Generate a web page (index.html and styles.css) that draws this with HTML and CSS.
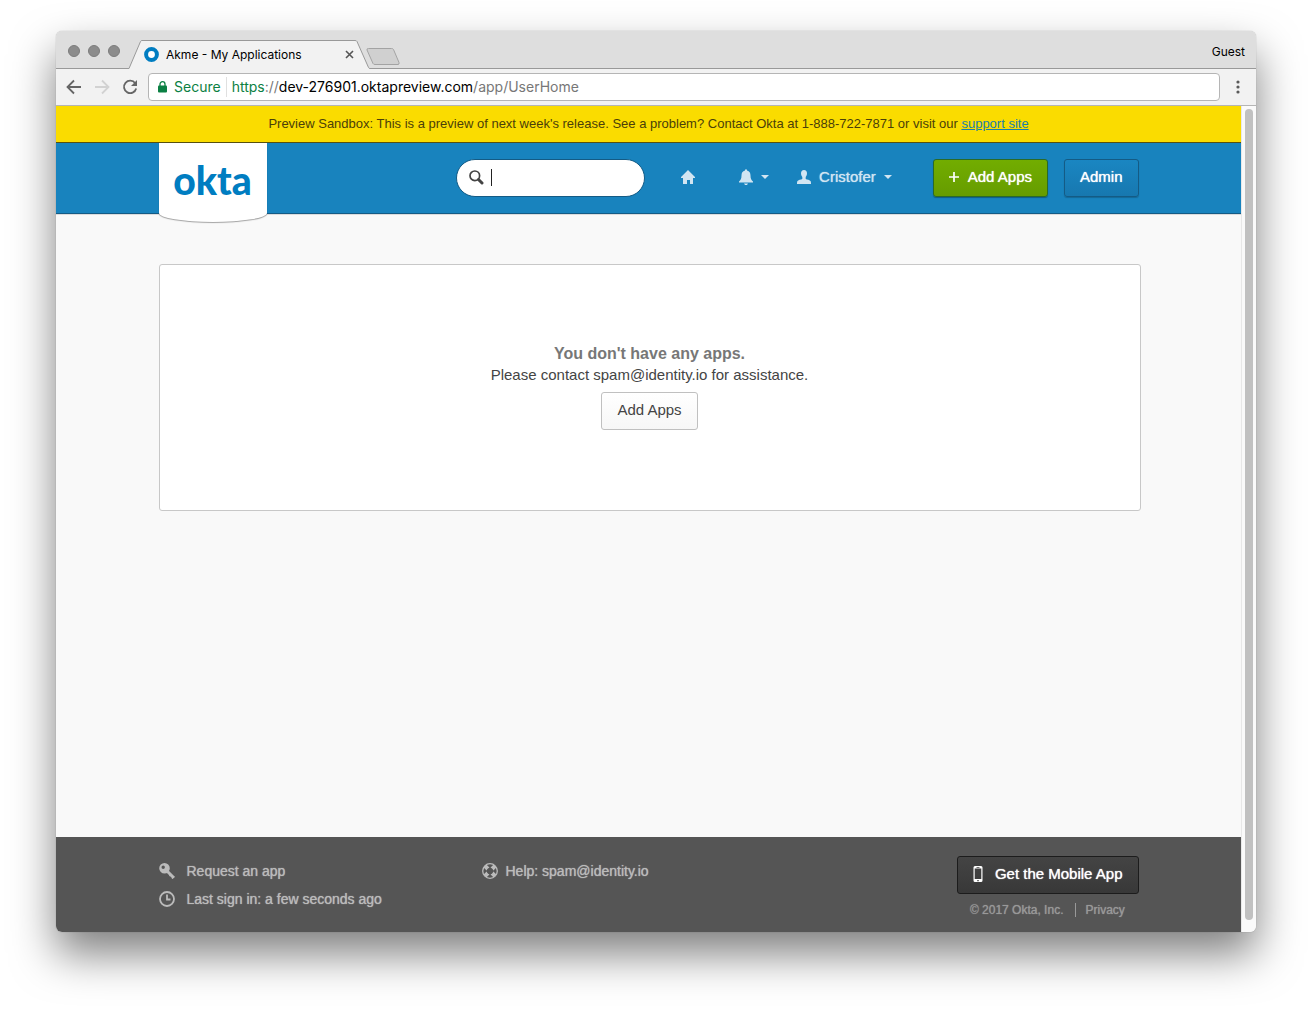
FILE: index.html
```html
<!DOCTYPE html>
<html lang="en">
<head>
<meta charset="utf-8">
<title>Akme - My Applications</title>
<link rel="stylesheet" href="styles.css">
</head>
<body>
<div class="window">
  <div class="tabstrip">
    <div class="lights"><span class="light"></span><span class="light"></span><span class="light"></span></div>
    <div class="tab">
      <svg class="tab-shape" viewBox="0 0 242 29" preserveAspectRatio="none" aria-hidden="true"><path d="M0 28.500H1L12.500 1.500Q13 .5 14 .5H227Q228.500 .5 229 1.500L240.500 27.500Q241 28.500 242 28.500V29H0Z" fill="#f2f2f2"/><path d="M0 28.500H1L12.500 1.500Q13 .5 14 .5H227Q228.500 .5 229 1.500L240.500 27.500Q241 28.500 242 28.500" fill="none" stroke="#999"/></svg>
      <svg class="favicon" width="15" height="15" viewBox="0 0 15 15" aria-hidden="true"><circle cx="7.500" cy="7.500" r="5.400" fill="#fff" stroke="#007dc1" stroke-width="4"/></svg>
      <span class="tab-title">Akme - My Applications</span>
      <button class="plain tab-close" aria-label="Close tab"><svg width="9" height="9" viewBox="0 0 9 9"><path d="M1 1l7 7M8 1L1 8" stroke="#555" stroke-width="1.600"/></svg></button>
    </div>
    <button class="plain new-tab" aria-label="New tab"><svg width="34" height="17" viewBox="0 0 34 17"><path d="M2.500 .5H25.500Q27 .5 27.500 1.500L33 14.500Q33.500 16.500 32 16.500H9Q7.500 16.500 7 15.500L1 2Q.5 .5 2.500 .5Z" fill="#d0d0d0" stroke="#a3a3a3"/></svg></button>
    <span class="guest">Guest</span>
  </div>
  <div class="toolbar">
    <button class="plain nav-btn" aria-label="Back"><svg width="16" height="16" viewBox="0 0 16 16" fill="none" stroke="#666" stroke-width="1.800"><path d="M15 8H2M8 1.500L1.500 8L8 14.500"/></svg></button>
    <button class="plain nav-btn" aria-label="Forward"><svg width="16" height="16" viewBox="0 0 16 16" fill="none" stroke="#d2d2d2" stroke-width="1.800"><path d="M1 8H14M8 1.500L14.500 8L8 14.500"/></svg></button>
    <button class="plain nav-btn" aria-label="Reload"><svg width="16" height="16" viewBox="0 0 16 16"><path d="M13.200 4.200A6.200 6.200 0 1 0 14.200 9.500" fill="none" stroke="#666" stroke-width="1.800"/><path d="M15 1V7H9Z" fill="#666"/></svg></button>
    <div class="address">
      <svg width="9" height="12" viewBox="0 0 9 12" aria-hidden="true"><path d="M2 5V3.200a2.500 2.500 0 0 1 5 0V5" fill="none" stroke="#0b8043" stroke-width="1.300"/><rect y="4.500" width="9" height="7" rx="1" fill="#0b8043"/></svg>
      <span class="secure">Secure</span>
      <span class="url"><span class="scheme">https</span>://<span class="host">dev-276901.oktapreview.com</span>/app/UserHome</span>
    </div>
    <button class="plain menu-btn" aria-label="Menu"><svg width="4" height="14" viewBox="0 0 4 14" fill="#5a5a5a"><circle cx="2" cy="2" r="1.600"/><circle cx="2" cy="7" r="1.600"/><circle cx="2" cy="12" r="1.600"/></svg></button>
  </div>
  <div class="viewport">
    <div class="page">
      <div class="banner">Preview Sandbox: This is a preview of next week's release. See a problem? Contact Okta at 1-888-722-7871 or visit our <a href="#">support site</a></div>
      <header class="header">
        <div class="container header-row">
          <a class="logo" href="#">okta</a>
          <div class="header-right">
            <label class="search">
              <svg width="15" height="15" viewBox="0 0 15 15" aria-hidden="true"><circle cx="5.800" cy="5.800" r="4.800" fill="none" stroke="#444" stroke-width="1.700"/><path d="M9.500 9.500L13 13" stroke="#444" stroke-width="3" stroke-linecap="round"/></svg>
              <span class="caret-bar"></span>
              <input type="text" aria-label="Search apps">
            </label>
            <nav class="nav">
              <a class="nav-link" href="#" aria-label="Home"><svg width="14" height="14" viewBox="0 0 14 14" fill="#d1e5f2"><path d="M7 0L14 7V8H12V14H9V10H6V14H2V8H0V7Z"/></svg></a>
              <a class="nav-link" href="#" aria-label="Notifications"><svg width="14" height="16" viewBox="0 0 14 16" fill="#d1e5f2"><path d="M6 .5h2v1C10.500 2 11.500 4 11.500 6.500C11.500 10 12.500 11 14 12.500V13.500H0V12.500C1.500 11 2.500 10 2.500 6.500C2.500 4 3.500 2 6 1.500ZM5 14.500H9L8 16H6Z"/></svg><span class="down"></span></a>
              <a class="nav-link" href="#"><svg width="14" height="14" viewBox="0 0 14 14" fill="#d1e5f2"><path d="M7 0C9 0 10 1.300 10 3.300C10 5 9.300 6.300 8.700 7V9C10 9.500 13 10 13.700 11.300Q14 12 14 14H0Q0 12 .3 11.300C1 10 4 9.500 5.300 9V7C4.700 6.300 4 5 4 3.300C4 1.300 5 0 7 0Z"/></svg><span class="user-name">Cristofer</span><span class="down"></span></a>
            </nav>
            <button class="btn btn-green"><svg width="10" height="10" viewBox="0 0 10 10" aria-hidden="true"><path d="M5 0V10M0 5H10" stroke="#fff" stroke-width="1.700"/></svg>Add Apps</button>
            <button class="btn btn-blue">Admin</button>
          </div>
        </div>
      </header>
      <main class="container main">
        <section class="card">
          <h1>You don't have any apps.</h1>
          <p>Please contact spam@identity.io for assistance.</p>
          <button class="btn btn-light">Add Apps</button>
        </section>
      </main>
      <footer class="footer">
        <div class="container footer-row">
          <div class="foot-col">
            <a class="foot-link" href="#"><svg width="16" height="16" viewBox="0 0 16 16"><path fill-rule="evenodd" fill="#bbb" d="M5.500 0a5.300 5.300 0 1 1 0 10.600A5.300 5.300 0 0 1 5.500 0ZM4.200 2.500a1.700 1.700 0 1 0 0 3.400A1.700 1.700 0 0 0 4.200 2.500Z"/><path d="M7.500 7.500L14.500 14.500" stroke="#bbb" stroke-width="3"/><path d="M10.500 13l2-1.500M13 15.500l2.500-2" stroke="#bbb" stroke-width="1.500"/></svg>Request an app</a>
            <span class="foot-link"><svg width="16" height="16" viewBox="0 0 16 16" fill="none" stroke="#bbb" stroke-width="1.800"><circle cx="8" cy="8" r="7"/><path d="M8 3.500V8.500H11.500"/></svg>Last sign in: a few seconds ago</span>
          </div>
          <div class="foot-col foot-help">
            <a class="foot-link tight" href="#"><svg width="16" height="16" viewBox="0 0 16 16" fill="none" stroke="#bbb"><circle cx="8" cy="8" r="7.300" stroke-width="1.300"/><path d="M3 3L6 6M13 3L10 6M3 13L6 10M13 13L10 10" stroke-width="4"/><circle cx="8" cy="8" r="3.100" fill="#555" stroke="none"/></svg>Help: spam@identity.io</a>
          </div>
          <div class="foot-right">
            <button class="btn btn-dark"><svg width="10" height="16" viewBox="0 0 10 16" aria-hidden="true"><path fill="#fff" fill-rule="evenodd" d="M2 0H8Q9.500 0 9.500 1.500V14.500Q9.500 16 8 16H2Q.5 16 .5 14.500V1.500Q.5 0 2 0ZM1.700 2.500V13H8.300V2.500ZM3.500 .9V1.700H6.500V.9ZM4.300 14V15.200H5.700V14Z"/></svg>Get the Mobile App</button>
            <div class="legal"><span>© 2017 Okta, Inc.</span><a href="#">Privacy</a></div>
          </div>
        </div>
      </footer>
    </div>
    <div class="scroll-track"><div class="scroll-thumb"></div></div>
  </div>
</div>
</body>
</html>
```
FILE: styles.css
```css
* { box-sizing: border-box; }

body {
  margin: 0;
  padding: 31px 56px 80px;
  background: #fff;
  color: #444;
  font: 15px/22px "Liberation Sans", Arial, sans-serif;
}

a { color: inherit; text-decoration: none; }
svg { display: block; flex: none; }

.plain { padding: 0; border: 0; background: none; }

.window {
  display: flex;
  flex-direction: column;
  min-height: calc(100vh - 111px);
  border-radius: 6px;
  background: #f2f2f2;
  box-shadow: 0 0 1px rgba(0, 0, 0, .4), 0 22px 44px rgba(0, 0, 0, .5);
  overflow: hidden;
}

/* Browser chrome */
.tabstrip {
  display: flex;
  align-items: flex-end;
  height: 38px;
  background: #dedede;
  box-shadow: inset 0 -1px #999;
  color: #000;
  font: 12px/18px Inter, sans-serif;
}
.lights { display: flex; gap: 8px; padding: 0 8px 12px 12px; }
.light { width: 12px; height: 12px; border: 1px solid #7c7c7c; border-radius: 50%; background: #8c8c8c; }
.tab {
  position: relative;
  display: flex;
  align-items: center;
  width: 242px;
  height: 29px;
  padding: 0 16px;
}
.tab-shape { position: absolute; inset: 0; width: 100%; height: 100%; }
.favicon, .tab-title, .tab-close { position: relative; }
.tab-title { flex: 1; margin-left: 7px; white-space: nowrap; }
.new-tab { margin: 0 0 4px -4px; }
.guest { margin: 0 11px 8px auto; }

.toolbar {
  display: flex;
  align-items: center;
  height: 37px;
  padding: 0 16px 0 10px;
  border-bottom: 1px solid #b5b5b5;
}
.nav-btn { margin-right: 12px; }
.address {
  display: flex;
  flex: 1;
  align-items: center;
  height: 28px;
  margin-right: 16px;
  margin-left: -2px;
  padding: 0 9px;
  border: 1px solid #b5b5b5;
  border-radius: 4px;
  background: #fff;
  font: 14px/20px Inter, sans-serif;
}
.secure { margin-left: 7px; padding-right: 5px; border-right: 1px solid #e0e0e0; color: #0b8043; }
.url { margin-left: 5px; color: #777; }
.scheme { color: #0b8043; }
.host { color: #000; }

/* Page */
.viewport { display: flex; flex: 1; }
.page { display: flex; flex: 1; flex-direction: column; background: #f9f9f9; }
.scroll-track { width: 15px; padding: 3px 3px 12px; border-left: 1px solid #e8e8e8; background: #fafafa; }
.scroll-thumb { width: 8px; height: 100%; border-radius: 4px; background: #c1c1c1; }
.container { width: 100%; max-width: 980px; margin: 0 auto; }

.banner {
  padding: 7px 16px;
  border-bottom: 1px solid #57500f;
  background: #fadc00;
  color: #4a3f0a;
  font-size: 13px;
  text-align: center;
}
.banner a { color: #1a7fa8; text-decoration: underline; }

.header { border-bottom: 1px solid #145b85; background: #1883be; box-shadow: 0 1px #dcdcdc; }
.header-row { display: flex; justify-content: space-between; align-items: flex-start; height: 70px; }
.logo {
  width: 108px;
  height: 79px;
  border-radius: 0 0 50% 50% / 0 0 9px 9px;
  background: #fff;
  box-shadow: 0 1px 1px rgba(0, 0, 0, .35);
  color: #007dc1;
  font: 900 39px/74px Lato, sans-serif;
  text-align: center;
}
.header-right { display: flex; align-items: center; padding-top: 16px; }
.search {
  display: flex;
  align-items: center;
  width: 189px;
  height: 38px;
  padding: 0 12px 2px;
  border: 1px solid #145b85;
  border-radius: 19px;
  background: #fff;
}
.caret-bar { width: 1px; height: 17px; margin-left: 7px; background: #222; }
.search input { flex: 1; min-width: 0; padding: 0; border: 0; outline: 0; background: none; font: inherit; }
.nav { display: flex; gap: 28px; margin: 0 41px 0 36px; padding-bottom: 2px; }
.nav .nav-link:first-child { margin-right: 16px; }
.nav-link { display: flex; align-items: center; gap: 8px; color: #d1e5f2; text-shadow: 0 0 1px currentColor; }
.down { border: 4px solid transparent; border-top-color: #d1e5f2; border-bottom: 0; }

.btn {
  display: flex;
  align-items: center;
  height: 38px;
  padding: 0 15px 2px;
  border: 1px solid;
  border-radius: 3px;
  color: #fff;
  font: inherit;
  white-space: nowrap;
}
.btn-green, .btn-blue, .btn-dark { text-shadow: 0 0 1px currentColor; }
.btn-green { gap: 9px; margin-right: 16px; border-color: #2a6a28; background: linear-gradient(#72ad00, #669c00); box-shadow: 0 1px 1px rgba(0, 0, 0, .3); }
.btn-blue { border-color: #145b85; background: linear-gradient(#1a86c2, #1778b0); box-shadow: 0 1px 1px rgba(0, 0, 0, .2); }
.btn-light { border-color: #c0c0c0; background: linear-gradient(#fff, #f7f7f7); color: #444; }
.btn-dark { gap: 12px; border-color: #1c1c1c; background: linear-gradient(#444, #383838); }

.main { flex: 1; padding: 50px 0; }
.card {
  display: flex;
  flex-direction: column;
  align-items: center;
  margin-right: -2px;
  padding: 78px 20px 80px;
  border: 1px solid #c8c8c8;
  border-radius: 3px;
  background: #fff;
}
.card h1 { margin: 0; color: #777; font-size: 16px; line-height: 22px; }
.card p { margin: 0 0 7px; line-height: 20px; }

.footer { padding: 19px 0 15px; background: #555; color: #bbb; font-size: 14px; }
.footer-row { display: flex; align-items: flex-start; }
.foot-col { display: flex; flex-direction: column; gap: 6px; width: 323px; padding-top: 4px; text-shadow: 0 0 1px currentColor; }
.foot-link { display: flex; align-items: center; gap: 12px; }
.tight { gap: 8px; }
.foot-right { margin-left: auto; }
.foot-right .btn { font-size: 15px; }
.legal { display: flex; align-items: center; margin-top: 9px; padding-left: 13px; color: #999; font-size: 12px; line-height: 14px; text-shadow: 0 0 1px currentColor; }
.legal a { margin-left: 12px; padding-left: 9px; border-left: 1px solid #999; }
```
